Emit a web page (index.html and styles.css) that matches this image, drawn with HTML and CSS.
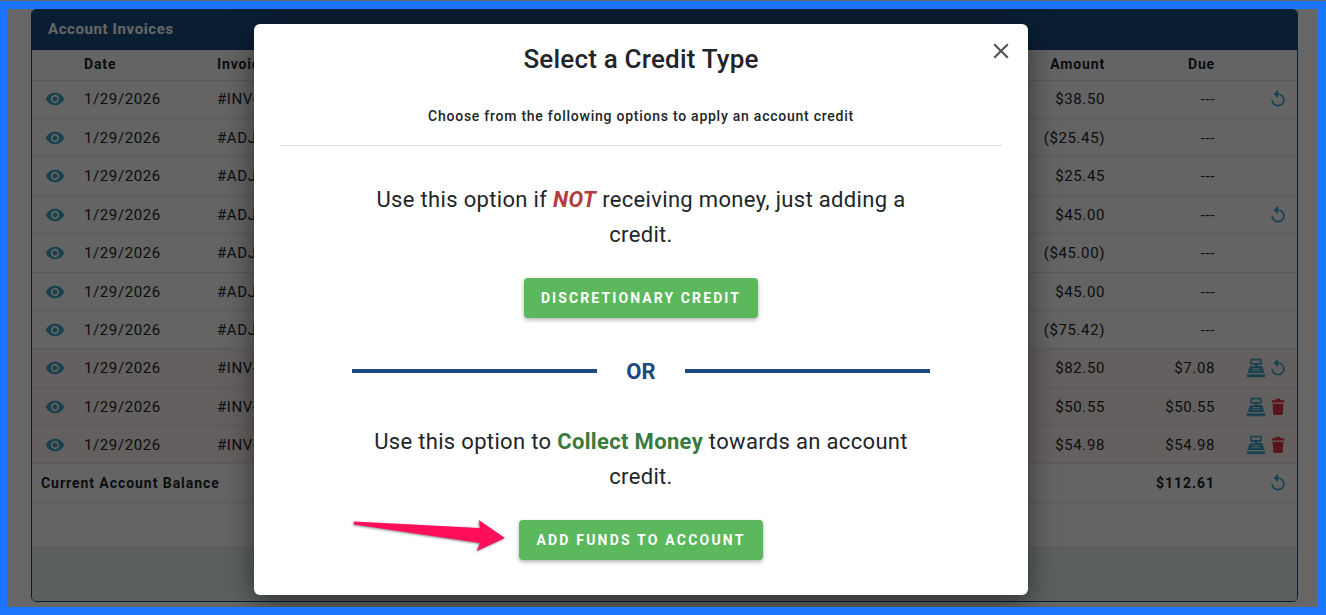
FILE: index.html
```html
<!DOCTYPE html>
<html lang="en">
  <head>
    <meta charset="UTF-8" />
    <title>Account Invoices</title>
    <link rel="stylesheet" href="styles.css">
  </head>

  <body>
    <svg class="icon-defs" width="0" height="0">
      <symbol id="eye" viewBox="0 0 24 24"><path d="M12 4.500C7 4.500 2.730 7.610 1 12c1.730 4.390 6 7.500 11 7.500s9.270-3.110 11-7.500c-1.730-4.390-6-7.500-11-7.500zM12 17c-2.760 0-5-2.240-5-5s2.240-5 5-5 5 2.240 5 5-2.240 5-5 5zm0-8c-1.660 0-3 1.340-3 3s1.340 3 3 3 3-1.340 3-3-1.340-3-3-3z"/></symbol>
      <symbol id="undo" viewBox="0 0 24 24"><path d="M12 5V1L7 6l5 5V7c3.310 0 6 2.690 6 6s-2.690 6-6 6-6-2.690-6-6H4c0 4.420 3.580 8 8 8s8-3.580 8-8-3.580-8-8-8z"/></symbol>
      <symbol id="trash" viewBox="0 0 24 24"><path d="M5.500 8h13l-.8 12c-.1.900-.8 1.500-1.600 1.500H7.900c-.8 0-1.500-.6-1.600-1.500zM9.500 2h5l1 1.800H19.500V6.500H4.500V3.800H8.500z"/></symbol>
      <symbol id="register" viewBox="0 0 24 24"><path fill-rule="evenodd" d="M6.500 1h11c.8 0 1.500.7 1.500 1.500v4c0 .8-.7 1.500-1.500 1.500H13.500v1.500h5c.7 0 1.300.5 1.500 1.200L22 18H2l2-6.800c.2-.7.800-1.200 1.500-1.200h5V8H6.500C5.700 8 5 7.300 5 6.500v-4C5 1.700 5.700 1 6.500 1zM7 3v3h10V3zM8 12v1.200h2V12zm3 0v1.200h2V12zm3 0v1.200h2V12zM8 14.500v1.200h2v-1.200zm3 0v1.200h2v-1.200zm3 0v1.200h2v-1.200zM1 19.500h22V21.500c0 .9-.7 1.500-1.500 1.500h-19C1.700 23 1 22.400 1 21.500z"/></symbol>
    </svg>

    <div class="frame">
      <div class="page">
        <div class="panel">
          <div class="panel-title">Account Invoices</div>
          <div class="row head">
            <span class="c-icon"></span>
            <span class="c-date">Date</span>
            <span class="c-inv">Invoice</span>
            <span class="c-amt">Amount</span>
            <span class="c-due">Due</span>
            <span class="c-act"></span>
          </div>

          <div class="row h38 lift">
            <span class="c-icon"><svg class="ic teal"><use href="#eye"/></svg></span>
            <span class="c-date">1/29/2026</span>
            <span class="c-inv">#INV-1</span>
            <span class="c-amt">$38.50</span>
            <span class="c-due">---</span>
            <span class="c-act"><svg class="ic teal"><use href="#undo"/></svg></span>
          </div>
          <div class="row h38">
            <span class="c-icon"><svg class="ic teal"><use href="#eye"/></svg></span>
            <span class="c-date">1/29/2026</span>
            <span class="c-inv">#ADJ-1</span>
            <span class="c-amt">($25.45)</span>
            <span class="c-due">---</span>
            <span class="c-act"></span>
          </div>
          <div class="row h39">
            <span class="c-icon"><svg class="ic teal"><use href="#eye"/></svg></span>
            <span class="c-date">1/29/2026</span>
            <span class="c-inv">#ADJ-2</span>
            <span class="c-amt">$25.45</span>
            <span class="c-due">---</span>
            <span class="c-act"></span>
          </div>
          <div class="row h38">
            <span class="c-icon"><svg class="ic teal"><use href="#eye"/></svg></span>
            <span class="c-date">1/29/2026</span>
            <span class="c-inv">#ADJ-3</span>
            <span class="c-amt">$45.00</span>
            <span class="c-due">---</span>
            <span class="c-act"><svg class="ic teal"><use href="#undo"/></svg></span>
          </div>
          <div class="row h39">
            <span class="c-icon"><svg class="ic teal"><use href="#eye"/></svg></span>
            <span class="c-date">1/29/2026</span>
            <span class="c-inv">#ADJ-4</span>
            <span class="c-amt">($45.00)</span>
            <span class="c-due">---</span>
            <span class="c-act"></span>
          </div>
          <div class="row h38">
            <span class="c-icon"><svg class="ic teal"><use href="#eye"/></svg></span>
            <span class="c-date">1/29/2026</span>
            <span class="c-inv">#ADJ-5</span>
            <span class="c-amt">$45.00</span>
            <span class="c-due">---</span>
            <span class="c-act"></span>
          </div>
          <div class="row h38">
            <span class="c-icon"><svg class="ic teal"><use href="#eye"/></svg></span>
            <span class="c-date">1/29/2026</span>
            <span class="c-inv">#ADJ-6</span>
            <span class="c-amt">($75.42)</span>
            <span class="c-due">---</span>
            <span class="c-act"></span>
          </div>
          <div class="row h39 owing">
            <span class="c-icon"><svg class="ic teal"><use href="#eye"/></svg></span>
            <span class="c-date">1/29/2026</span>
            <span class="c-inv">#INV-2</span>
            <span class="c-amt">$82.50</span>
            <span class="c-due">$7.08</span>
            <span class="c-act"><svg class="ic teal"><use href="#register"/></svg><svg class="ic teal"><use href="#undo"/></svg></span>
          </div>
          <div class="row h38 owing">
            <span class="c-icon"><svg class="ic teal"><use href="#eye"/></svg></span>
            <span class="c-date">1/29/2026</span>
            <span class="c-inv">#INV-3</span>
            <span class="c-amt">$50.55</span>
            <span class="c-due">$50.55</span>
            <span class="c-act"><svg class="ic teal"><use href="#register"/></svg><svg class="ic red"><use href="#trash"/></svg></span>
          </div>
          <div class="row h38 owing">
            <span class="c-icon"><svg class="ic teal"><use href="#eye"/></svg></span>
            <span class="c-date">1/29/2026</span>
            <span class="c-inv">#INV-4</span>
            <span class="c-amt">$54.98</span>
            <span class="c-due">$54.98</span>
            <span class="c-act"><svg class="ic teal"><use href="#register"/></svg><svg class="ic red"><use href="#trash"/></svg></span>
          </div>
          <div class="row h39 total">
            <span class="c-label">Current Account Balance</span>
            <span class="c-due">$112.61</span>
            <span class="c-act"><svg class="ic teal"><use href="#undo"/></svg></span>
          </div>
          <div class="row blank"></div>
          <div class="panel-foot"></div>
        </div>
      </div>

      <div class="overlay">
        <div class="modal">
          <button class="close" type="button" aria-label="Close">
            <svg viewBox="0 0 24 24"><path d="M19 6.410 17.590 5 12 10.590 6.410 5 5 6.410 10.590 12 5 17.590 6.410 19 12 13.410 17.590 19 19 17.590 13.410 12z"/></svg>
          </button>
          <h2 class="modal-title">Select a Credit Type</h2>
          <p class="modal-sub">Choose from the following options to apply an account credit</p>
          <hr class="rule" />
          <p class="option first">Use this option if <em class="not">NOT</em> receiving money, just adding a credit.</p>
          <button class="btn btn-credit" type="button">Discretionary Credit</button>
          <div class="or"><span class="or-line"></span><span class="or-text">OR</span><span class="or-line"></span></div>
          <p class="option second">Use this option to <strong class="collect">Collect Money</strong> towards an account credit.</p>
          <button class="btn btn-funds" type="button">Add Funds to Account</button>
          <svg class="arrow" viewBox="0 0 160 40"><path d="M5 6.500 L131 13 L130 5 L156 23 L128 36 L131 28 L5 9.500 Z"/></svg>
        </div>
      </div>
    </div>
  </body>
</html>
```

FILE: styles.css
```css
* {
  box-sizing: border-box;
}

html,
body {
  margin: 0;
  height: 100%;
  overflow: hidden;
}

body {
  font-family: Roboto, "Liberation Sans", sans-serif;
  color: #212529;
  background: #666;
}

.icon-defs {
  display: block;
  height: 0;
}

.frame {
  position: relative;
  height: 614px;
  margin-top: 1px;
  border-style: solid;
  border-color: #1a76ff;
  border-width: 8px 9px 8px 7px;
  overflow: hidden;
}

.page {
  height: 100%;
  padding: 0 19px 0 24px;
  background: #fff;
}

.panel {
  display: flex;
  flex-direction: column;
  height: 593px;
  border: 1px solid #1a4b80;
  border-radius: 5px;
  overflow: hidden;
  background: #fafafa;
  font-size: 15px;
  letter-spacing: 0.6px;
}

.panel-title {
  height: 40px;
  padding: 10px 16px 0;
  background: #1a4b80;
  color: #fff;
  font-weight: 700;
  font-size: 15px;
}

.row {
  display: flex;
  align-items: center;
  flex: none;
  border-bottom: 1px solid #dee2e6;
}

.head {
  height: 31px;
  padding-bottom: 2px;
  font-weight: 700;
  font-size: 14px;
  letter-spacing: 0.85px;
}

.h38 {
  height: 38px;
}

.h39 {
  height: 39px;
}

.lift {
  padding-bottom: 2px;
}

.owing {
  background: #fbf0ee;
}

.total {
  font-weight: 700;
  font-size: 14px;
  letter-spacing: 0.95px;
}

.blank {
  height: 45px;
}

.panel-foot {
  flex: 1;
  background: #e6f0f0;
}

.c-icon {
  width: 52px;
  padding-left: 13px;
  display: flex;
}

.c-date {
  width: 133px;
}

.c-inv {
  width: 758px;
}

.c-amt {
  width: 130px;
  text-align: right;
}

.c-due {
  width: 110px;
  text-align: right;
}

.c-label {
  width: 1073px;
  padding-left: 9px;
}

.c-act {
  flex: 1;
  display: flex;
  justify-content: flex-end;
  align-items: center;
  padding-right: 9px;
  gap: 2px;
}

.ic {
  width: 20px;
  height: 20px;
  display: block;
}

.teal {
  fill: #3ea4c4;
}

.red {
  fill: #dc3545;
}

.overlay {
  position: absolute;
  inset: 0;
  background: rgba(0, 0, 0, 0.6);
  display: flex;
  justify-content: center;
  align-items: flex-start;
  padding: 15px 42px 0 0;
}

.modal {
  position: relative;
  width: 774px;
  height: 571px;
  padding: 0 26px;
  background: #fff;
  border-radius: 6px;
  display: flex;
  flex-direction: column;
  align-items: center;
  box-shadow: 0 8px 30px rgba(0, 0, 0, 0.5);
}

.close {
  position: absolute;
  top: 14px;
  right: 14px;
  width: 26px;
  height: 26px;
  padding: 0;
  border: 0;
  background: none;
}

.close svg {
  display: block;
  fill: #555;
}

.modal-title {
  margin: 19px 0 0;
  font-size: 26px;
  line-height: 32px;
  font-weight: 500;
  letter-spacing: 0.2px;
}

.modal-sub {
  margin: 32px 0 0;
  font-size: 14px;
  line-height: 18px;
  font-weight: 500;
  letter-spacing: 0.75px;
}

.rule {
  width: 100%;
  margin: 20px 0 0;
  border: 0;
  border-top: 1px solid #ddd;
}

.option {
  width: 560px;
  margin: 0;
  text-align: center;
  font-size: 22px;
  line-height: 35px;
  letter-spacing: 0.33px;
}

.first {
  margin-top: 36px;
}

.second {
  margin-top: 37px;
}

.not {
  color: #b23c3e;
  font-weight: 700;
}

.collect {
  color: #3a7a3d;
  font-weight: 700;
}

.btn {
  height: 40px;
  padding: 0 17px;
  border: 0;
  border-radius: 4px;
  background: #5cb85c;
  color: #fff;
  font-family: inherit;
  font-size: 14px;
  font-weight: 700;
  letter-spacing: 2.1px;
  text-transform: uppercase;
  box-shadow: 0 2px 4px rgba(0, 0, 0, 0.3);
}

.btn-credit {
  margin-top: 26px;
}

.btn-funds {
  margin-top: 26px;
  letter-spacing: 2.2px;
}

.or {
  display: flex;
  align-items: center;
  width: 578px;
  margin-top: 37px;
  height: 32px;
}

.or-line {
  flex: 1;
  height: 4px;
  background: #1b4a80;
}

.or-text {
  width: 88px;
  text-align: center;
  font-size: 22px;
  font-weight: 700;
  color: #1b4a80;
}

.arrow {
  position: absolute;
  left: 95px;
  top: 491px;
  width: 160px;
  height: 40px;
  fill: #ff0f5a;
  filter: drop-shadow(-1px 1px 1px rgba(0, 0, 0, 0.45));
}
```
